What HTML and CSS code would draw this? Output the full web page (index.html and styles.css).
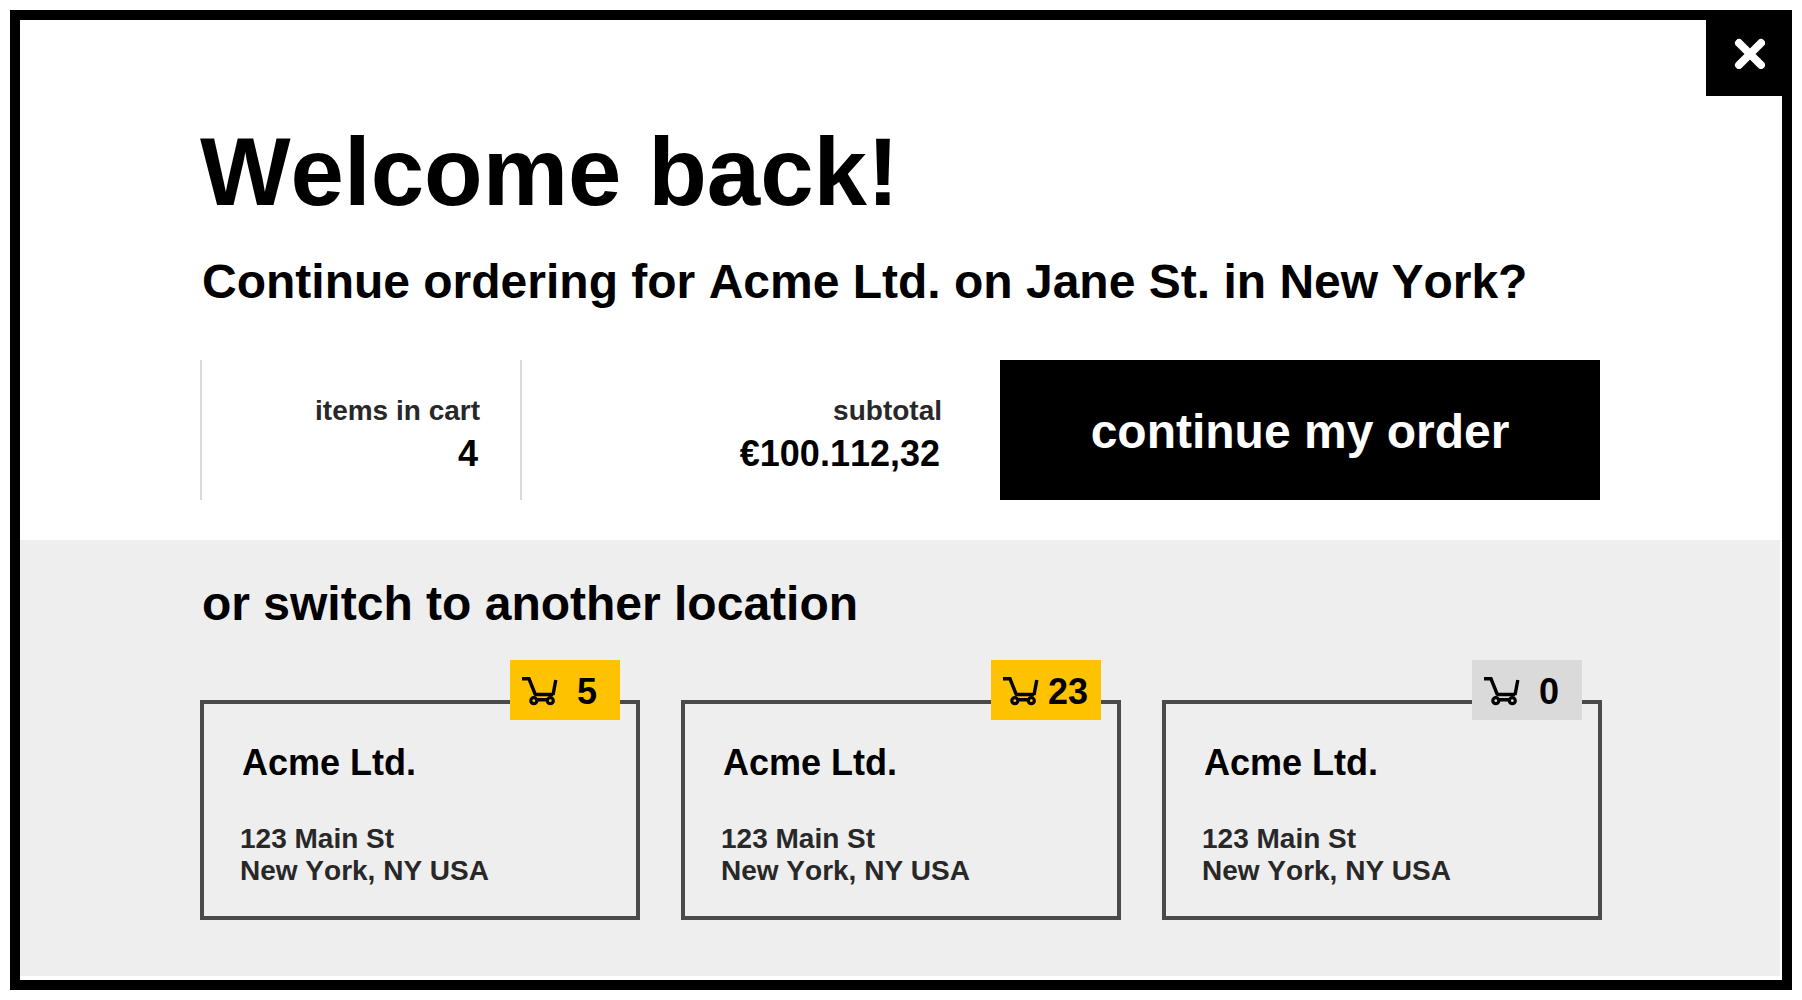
FILE: index.html
```html
<!DOCTYPE html>
<html lang="en">
<head>
  <meta charset="utf-8">
  <meta name="viewport" content="width=device-width, initial-scale=1">
  <title>Welcome back</title>
  <link rel="stylesheet" href="styles.css">
</head>
<body>
  <svg class="sprite" aria-hidden="true">
    <symbol id="cart" viewBox="0 0 36 30">
      <path d="M0 1.800H7L13.500 18M33.800 3L31 18M12.500 17.500H31M15 22.800H25" fill="none" stroke="currentColor" stroke-width="3.400"/>
      <circle cx="11.800" cy="23.700" r="3" fill="none" stroke="currentColor" stroke-width="3.200"/>
      <circle cx="28.300" cy="23.700" r="3" fill="none" stroke="currentColor" stroke-width="3.200"/>
    </symbol>
  </svg>

  <main class="dialog">
    <button class="close" type="button" aria-label="Close">
      <svg class="close-icon" viewBox="0 0 32 32" aria-hidden="true">
        <path d="M6 6L28 28M28 6L6 28" fill="none" stroke="currentColor" stroke-width="8" stroke-linecap="round"/>
      </svg>
    </button>

    <section class="current">
      <h1 class="title">Welcome back!</h1>
      <h2 class="subtitle">Continue ordering for Acme Ltd. on Jane St. in New York?</h2>
      <div class="summary">
        <dl class="stat">
          <dt class="stat-label">items in cart</dt>
          <dd class="stat-value">4</dd>
        </dl>
        <dl class="stat stat-total">
          <dt class="stat-label">subtotal</dt>
          <dd class="stat-value">€100.112,32</dd>
        </dl>
        <button class="continue" type="button">continue my order</button>
      </div>
    </section>

    <section class="switch">
      <h2 class="subtitle">or switch to another location</h2>
      <div class="locations">
        <a class="location" href="#location-1">
          <span class="badge"><svg class="cart-icon" aria-hidden="true"><use href="#cart"/></svg><span class="count">5</span></span>
          <strong class="name">Acme Ltd.</strong>
          <span class="address">123 Main St<br>New York, NY USA</span>
        </a>
        <a class="location" href="#location-2">
          <span class="badge"><svg class="cart-icon" aria-hidden="true"><use href="#cart"/></svg><span class="count">23</span></span>
          <strong class="name">Acme Ltd.</strong>
          <span class="address">123 Main St<br>New York, NY USA</span>
        </a>
        <a class="location" href="#location-3">
          <span class="badge badge-empty"><svg class="cart-icon" aria-hidden="true"><use href="#cart"/></svg><span class="count">0</span></span>
          <strong class="name">Acme Ltd.</strong>
          <span class="address">123 Main St<br>New York, NY USA</span>
        </a>
      </div>
    </section>
  </main>
</body>
</html>
```
FILE: styles.css
```css
* {
  box-sizing: border-box;
}

body {
  margin: 0;
  padding: 10px;
  background: #fff;
  color: #000;
  font-family: "Liberation Sans", Arial, Helvetica, sans-serif;
  font-weight: 700;
  font-kerning: none;
}

h1,
h2,
dl,
dd {
  margin: 0;
}

.sprite {
  position: absolute;
  width: 0;
  height: 0;
}

.dialog {
  position: relative;
  padding: 0 2px 4px 0;
  border: 10px solid #000;
}

.close {
  position: absolute;
  top: -10px;
  right: -10px;
  display: grid;
  place-items: center;
  width: 86px;
  height: 86px;
  padding: 0;
  border: 0;
  background: #000;
  color: #fff;
}

.close-icon {
  width: 32px;
  height: 32px;
}

.current {
  padding: 104px 180px 40px;
}

.title {
  font-size: 96px;
  line-height: 96px;
}

.subtitle {
  padding-left: 2px;
  font-size: 48px;
  line-height: 48px;
}

.title + .subtitle {
  margin-top: 38px;
}

.summary {
  display: grid;
  grid-template-columns: 320fr 480fr 600fr;
  min-height: 140px;
  margin-top: 54px;
}

.stat {
  padding: 35px 40px 0 0;
  border-left: 2px solid #dadada;
  text-align: right;
}

.stat-total {
  padding-right: 58px;
}

.stat-label {
  color: #282828;
  font-size: 28px;
  line-height: 32px;
}

.stat-value {
  margin-top: 5px;
  padding-right: 2px;
  font-size: 36px;
  line-height: 44px;
}

.continue {
  padding: 2px 0 0;
  border: 0;
  background: #000;
  color: #fff;
  font: inherit;
  font-kerning: none;
  font-size: 48px;
}

.switch {
  padding: 40px 178px 56px 180px;
  background: #eee;
}

.locations {
  display: grid;
  grid-template-columns: repeat(3, 1fr);
  gap: 41px;
  margin-top: 72px;
}

.location {
  position: relative;
  display: flex;
  flex-direction: column;
  gap: 42px;
  padding: 41px 36px 29px;
  border: 4px solid #4a4a4a;
  color: #000;
  text-decoration: none;
}

.badge {
  position: absolute;
  top: -44px;
  right: 16px;
  display: flex;
  align-items: center;
  gap: 8px;
  width: 110px;
  height: 60px;
  padding-left: 12px;
  background: #ffc200;
}

.badge-empty {
  background: #dadada;
}

.cart-icon {
  width: 36px;
  height: 30px;
  margin-top: 4px;
}

.count {
  width: 42px;
  padding-top: 4px;
  font-size: 36px;
  line-height: 36px;
  text-align: center;
}

.name {
  padding-left: 2px;
  font-size: 36px;
  line-height: 36px;
}

.address {
  color: #282828;
  font-size: 28px;
  line-height: 32px;
}
```
